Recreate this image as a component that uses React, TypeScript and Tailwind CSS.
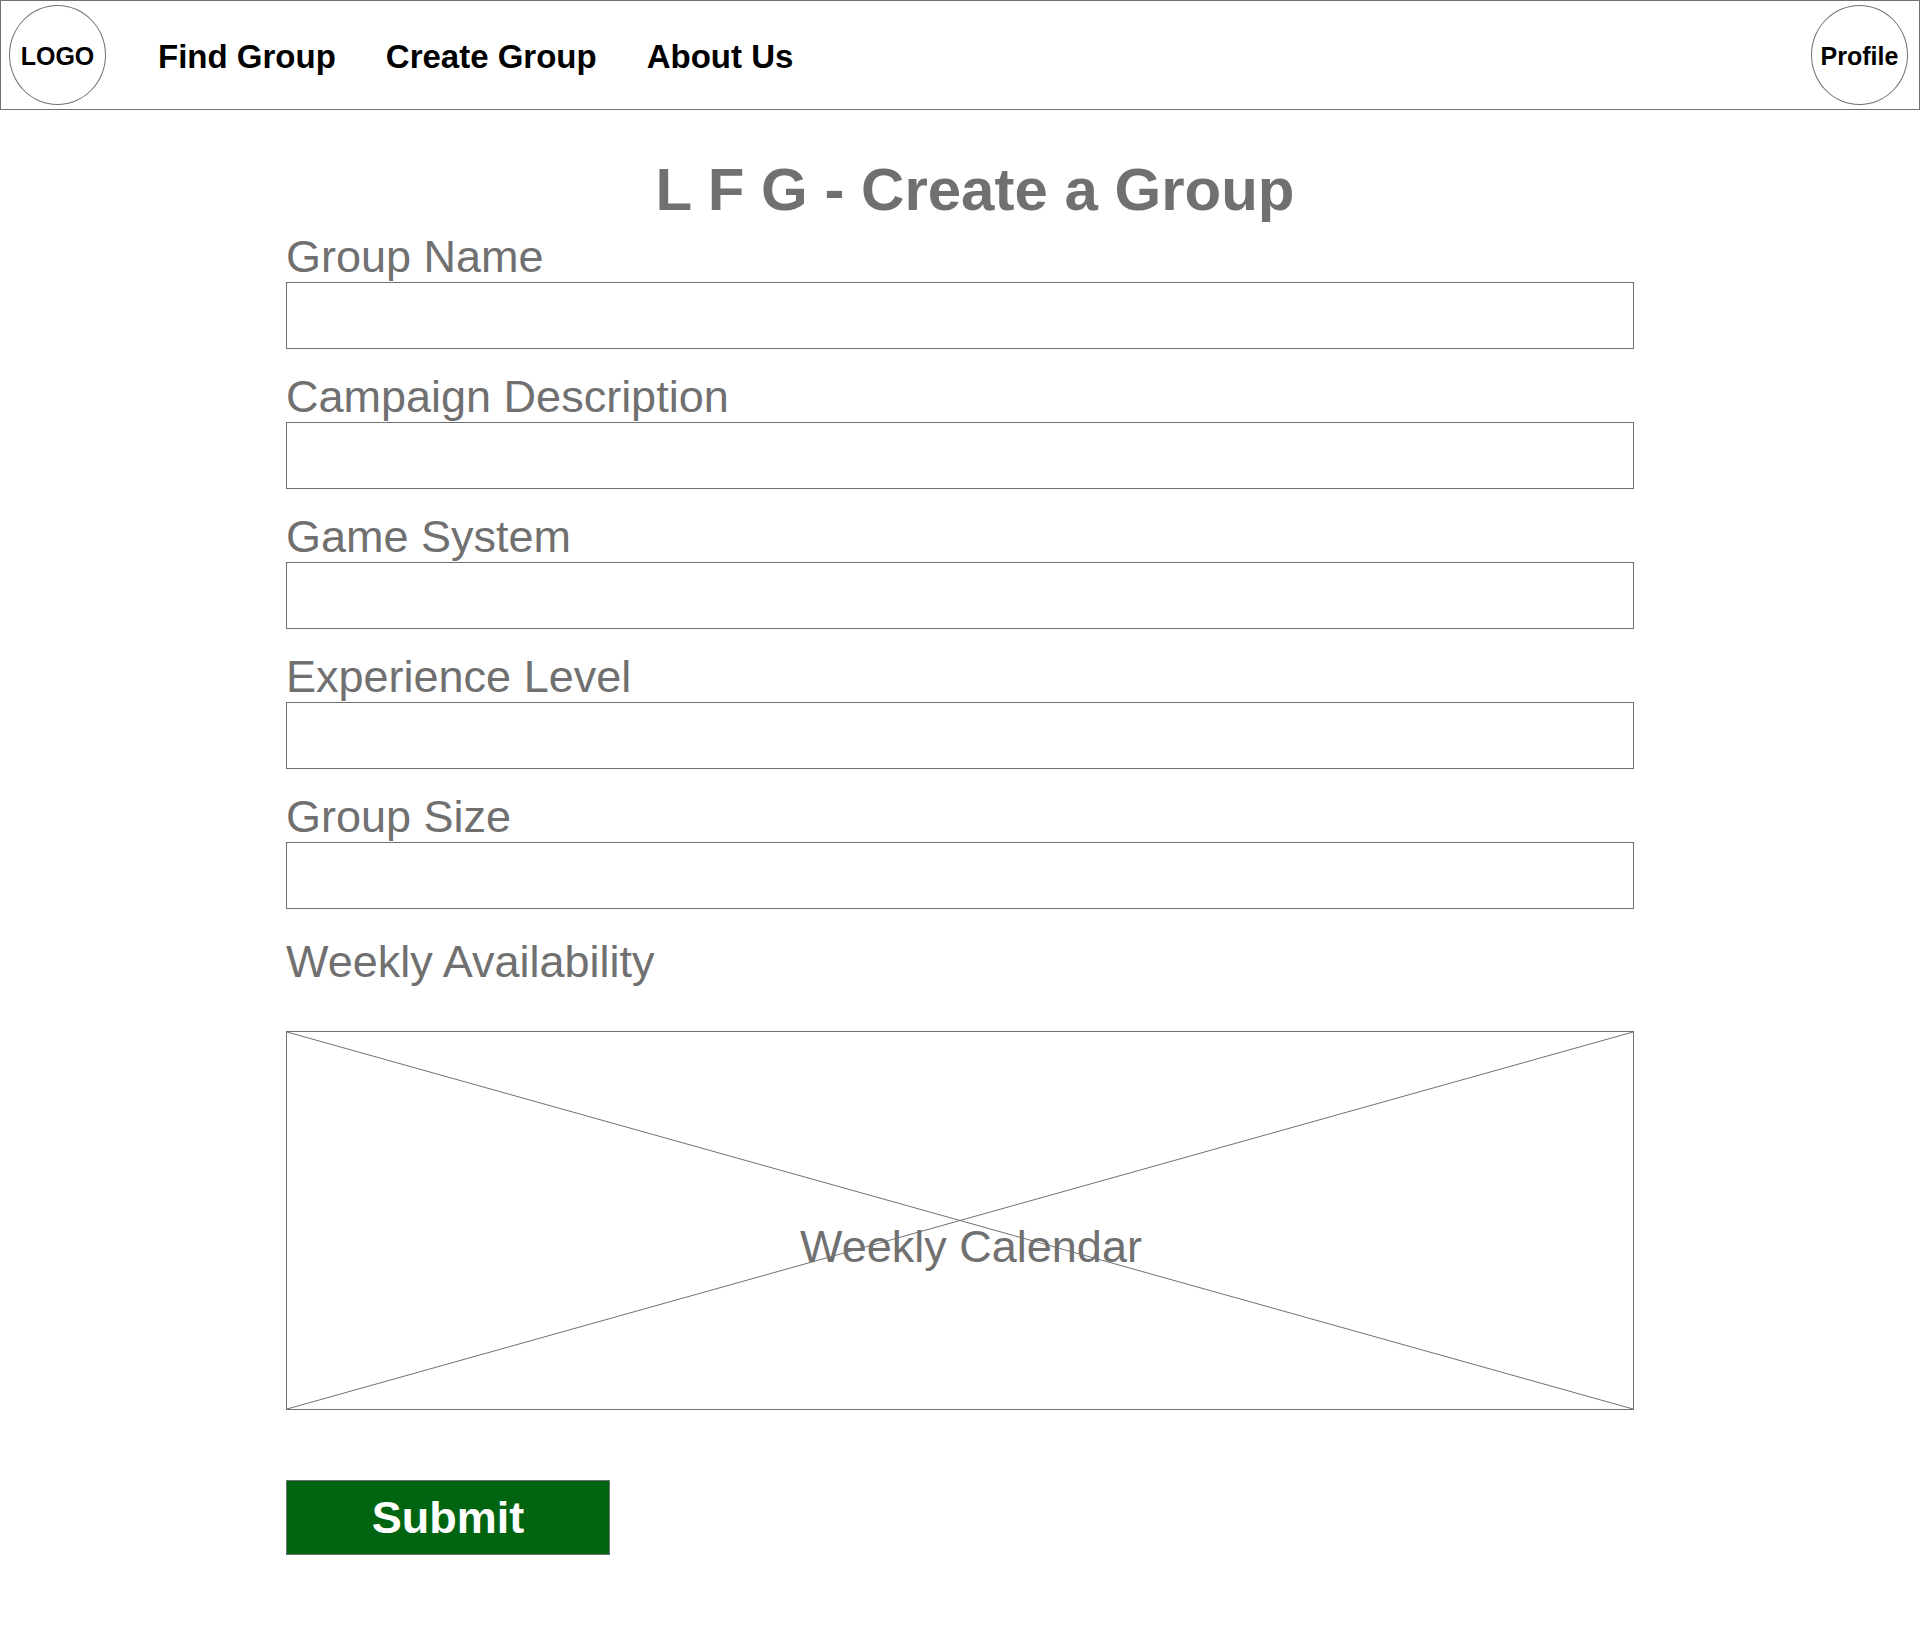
import React from "react";

const fields = [
  { id: "group-name", label: "Group Name" },
  { id: "campaign-description", label: "Campaign Description" },
  { id: "game-system", label: "Game System" },
  { id: "experience-level", label: "Experience Level" },
  { id: "group-size", label: "Group Size" },
];

const links = ["Find Group", "Create Group", "About Us"];

function RoundLink({ children }: { children: React.ReactNode }) {
  return (
    <a
      href="#"
      className="flex h-[100px] w-[97px] shrink-0 items-center justify-center rounded-[50%] border border-[#707070] pt-[2px] text-[25px] leading-[28px] font-bold text-black"
    >
      {children}
    </a>
  );
}

function Header() {
  return (
    <header className="flex items-center justify-between border border-[#707070] py-1 pr-[11px] pl-2">
      <div className="flex items-center gap-[52px]">
        <RoundLink>LOGO</RoundLink>
        <nav className="flex items-center gap-[50px] pt-[3px] text-[33px] leading-[40px] font-bold text-black">
          {links.map((name) => (
            <a key={name} href="#" className="whitespace-nowrap">
              {name}
            </a>
          ))}
        </nav>
      </div>
      <RoundLink>Profile</RoundLink>
    </header>
  );
}

function Field({ id, label }: { id: string; label: string }) {
  return (
    <div className="flex flex-col">
      <label htmlFor={id} className="text-[45px] leading-[50px]">
        {label}
      </label>
      <input
        id={id}
        type="text"
        className="h-[67px] w-full border border-[#707070] bg-white px-4 text-[33px] outline-none"
      />
    </div>
  );
}

function WeeklyCalendar() {
  return (
    <div className="relative mt-[44px] flex h-[379px] items-center justify-center border border-[#707070] pt-[52px] pl-[22px]">
      <svg
        className="absolute inset-0 h-full w-full overflow-visible"
        viewBox="0 0 100 100"
        preserveAspectRatio="none"
        aria-hidden="true"
      >
        <path
          d="M0 0L100 100M100 0L0 100"
          fill="none"
          stroke="#707070"
          strokeWidth="1"
          strokeLinecap="square"
          vectorEffect="non-scaling-stroke"
        />
      </svg>
      <span className="relative text-[45px] leading-[50px]">Weekly Calendar</span>
    </div>
  );
}

export default function App() {
  return (
    <div className="min-h-screen bg-white font-['Liberation_Sans',Arial,sans-serif] text-[#707070]">
      <Header />
      <main className="mx-auto max-w-[1348px] pt-[50px] pb-[82px]">
        <h1 className="pl-[30px] text-center text-[60px] leading-[60px] font-bold">
          L F G - Create a Group
        </h1>
        <form className="pt-[12px]" onSubmit={(e) => e.preventDefault()}>
          <div className="flex flex-col gap-[23px]">
            {fields.map((field) => (
              <Field key={field.id} id={field.id} label={field.label} />
            ))}
          </div>
          <h2 className="mt-[28px] text-[45px] leading-[50px]">Weekly Availability</h2>
          <WeeklyCalendar />
          <button
            type="submit"
            className="mt-[70px] block h-[75px] w-[324px] border border-[#707070] bg-[#006410] text-[45px] leading-[50px] font-bold text-white"
          >
            Submit
          </button>
        </form>
      </main>
    </div>
  );
}
